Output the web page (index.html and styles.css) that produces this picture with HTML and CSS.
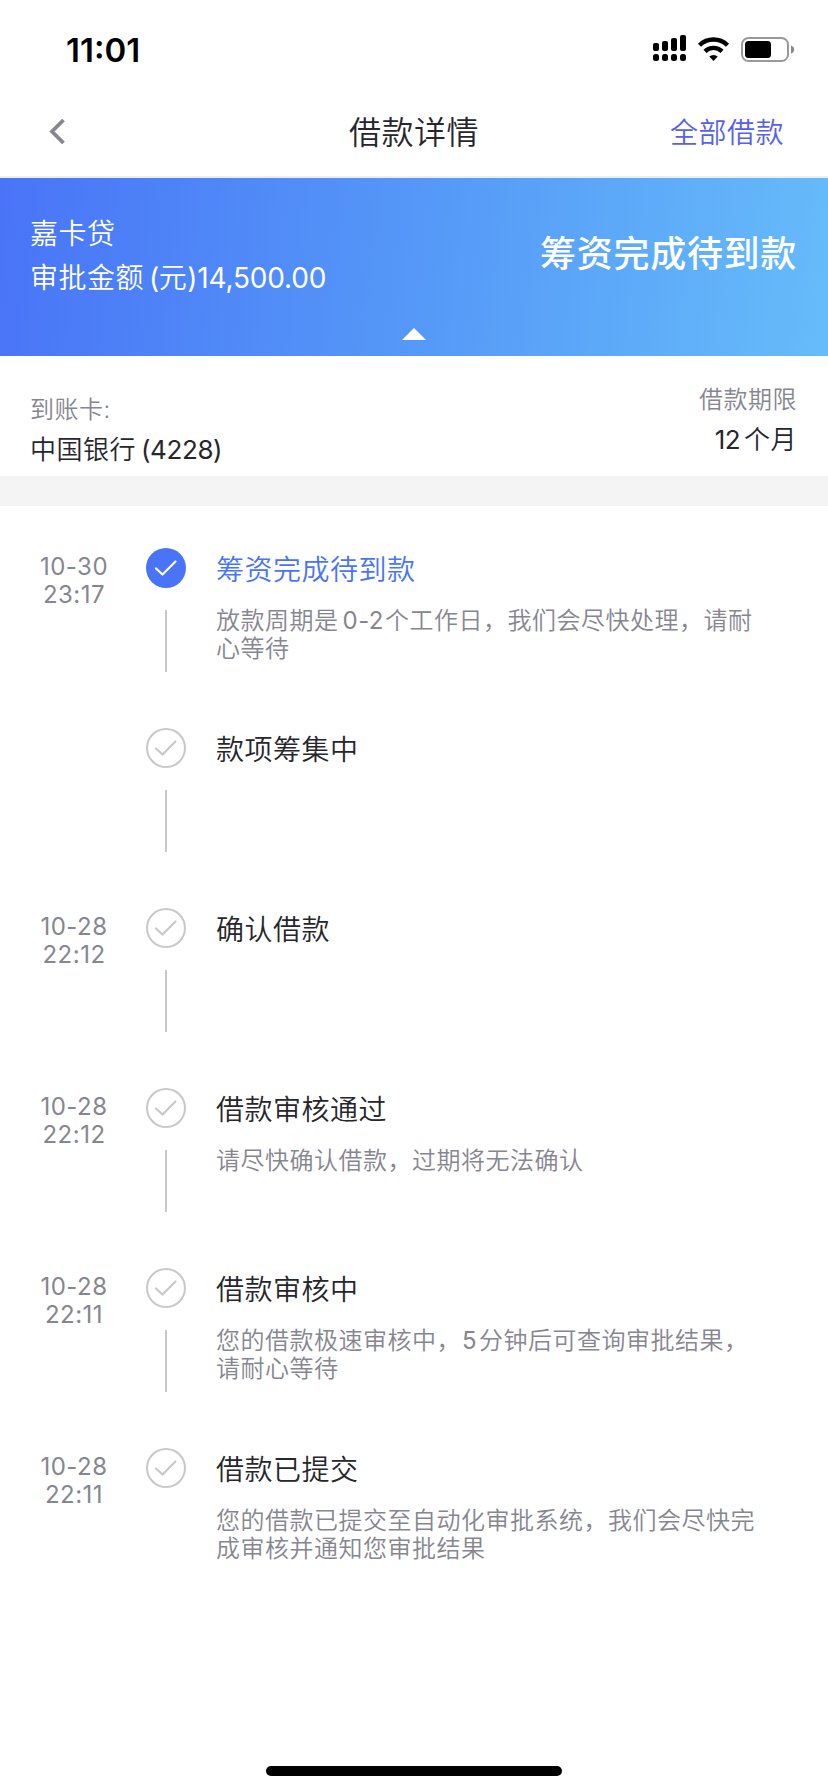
FILE: index.html
```html
<!DOCTYPE html>
<html lang="zh-CN">
<head>
    <meta charset="UTF-8">
    <title>借款详情</title>
    <link rel="stylesheet" href="styles.css">
</head>
<body>
<svg width="0" height="0" class="defs">
    <symbol id="check" viewBox="0 0 40 40">
        <path d="M10 20.500l6.500 6 13-13" fill="none" stroke="currentColor" stroke-width="2.200" stroke-linecap="round" stroke-linejoin="round"/>
    </symbol>
</svg>

<div class="status-bar">
    <span class="clock">11:01</span>
    <svg class="status-icons" width="144" height="30" viewBox="0 0 144 30">
        <rect x="0" y="9" width="6" height="8" rx="2"/>
        <rect x="9" y="7" width="6" height="10" rx="2"/>
        <rect x="18" y="4" width="6" height="13" rx="2"/>
        <rect x="27" y="1" width="6" height="16" rx="2"/>
        <rect x="0" y="20" width="6" height="7" rx="2.5"/>
        <rect x="9" y="20" width="6" height="7" rx="2.5"/>
        <rect x="18" y="20" width="6" height="7" rx="2.5"/>
        <rect x="27" y="20" width="6" height="7" rx="2.5"/>
        <g fill="none" stroke="#000" stroke-width="4.4">
            <path d="M46.5 11.2a20 20 0 0 1 28 0"/>
            <path d="M52 17.3a12.3 12.3 0 0 1 17 0"/>
        </g>
        <path d="M60.5 27l-4.2-4.4a6 6 0 0 1 8.4 0z"/>
        <rect x="89" y="4" width="46" height="23" rx="6.5" fill="none" stroke="#999" stroke-width="2"/>
        <rect x="92" y="7" width="26" height="17" rx="3.5"/>
        <path d="M138 11.500q3.200 1 3.200 4t-3.200 4z" fill="#888"/>
    </svg>
</div>

<div class="nav">
    <svg class="back" width="20" height="28" viewBox="0 0 20 28">
        <path d="M15.500 3L4 14.500 15.500 26" fill="none" stroke="#86868f" stroke-width="3.800"/>
    </svg>
    <h1>借款详情</h1>
    <a class="all">全部借款</a>
</div>

<div class="banner">
    <div class="product">
        <div>嘉卡贷</div>
        <div>审批金额<span class="latin">(</span>元<span class="amount">)14,500.00</span></div>
    </div>
    <div class="state">筹资完成待到款</div>
    <i class="arrow"></i>
</div>

<div class="info">
    <div class="card">
        <div class="label">到账卡:</div>
        <div class="value">中国银行<span class="latin">(4228)</span></div>
    </div>
    <div class="term">
        <div class="label">借款期限</div>
        <div class="value"><span class="months">12</span>个月</div>
    </div>
</div>

<div class="steps">
    <div class="step active">
        <div class="time">10-30<br>23:17</div>
        <div class="mark"><svg class="dot"><use href="#check"/></svg><i class="line"></i></div>
        <div class="content">
            <h2>筹资完成待到款</h2>
            <p>放款周期是<span class="num">0-2</span>个工作日，我们会尽快处理，请耐<br>心等待</p>
        </div>
    </div>
    <div class="step">
        <div class="time"></div>
        <div class="mark"><svg class="dot"><use href="#check"/></svg><i class="line"></i></div>
        <div class="content">
            <h2>款项筹集中</h2>
        </div>
    </div>
    <div class="step">
        <div class="time">10-28<br>22:12</div>
        <div class="mark"><svg class="dot"><use href="#check"/></svg><i class="line"></i></div>
        <div class="content">
            <h2>确认借款</h2>
        </div>
    </div>
    <div class="step">
        <div class="time">10-28<br>22:12</div>
        <div class="mark"><svg class="dot"><use href="#check"/></svg><i class="line"></i></div>
        <div class="content">
            <h2>借款审核通过</h2>
            <p>请尽快确认借款，过期将无法确认</p>
        </div>
    </div>
    <div class="step">
        <div class="time">10-28<br>22:11</div>
        <div class="mark"><svg class="dot"><use href="#check"/></svg><i class="line"></i></div>
        <div class="content">
            <h2>借款审核中</h2>
            <p>您的借款极速审核中，<span class="five">5</span>分钟后可查询审批结果，<br>请耐心等待</p>
        </div>
    </div>
    <div class="step">
        <div class="time">10-28<br>22:11</div>
        <div class="mark"><svg class="dot"><use href="#check"/></svg></div>
        <div class="content">
            <h2>借款已提交</h2>
            <p>您的借款已提交至自动化审批系统，我们会尽快完<br>成审核并通知您审批结果</p>
        </div>
    </div>
</div>

<div class="home-bar"></div>
</body>
</html>
```
FILE: styles.css
```css
* {
    box-sizing: border-box;
    margin: 0;
    padding: 0;
}

body {
    display: flex;
    flex-direction: column;
    height: 1792px;
    background: #fff;
    color: #26262b;
    font-family: Inter, "Noto Sans CJK SC", sans-serif;
    font-weight: 350;
    letter-spacing: 0.5px;
    white-space: nowrap;
}

.defs {
    position: absolute;
}

.status-bar {
    display: flex;
    justify-content: space-between;
    height: 88px;
    padding: 34px 31px 0 66px;
    color: #000;
}

.clock {
    font-size: 33px;
    line-height: 32px;
    font-weight: 600;
    letter-spacing: 0;
}

.nav {
    display: grid;
    grid-template-columns: 1fr auto 1fr;
    align-items: center;
    height: 90px;
    padding: 0 44px 2px 48px;
    border-bottom: 2px solid #eee;
}

.nav h1 {
    padding-top: 4px;
    margin-left: -4px;
    font-size: 32px;
    font-weight: 350;
    line-height: 40px;
}

.nav .all {
    justify-self: end;
    font-size: 28px;
    color: #5661e8;
}

.banner {
    position: relative;
    display: flex;
    justify-content: space-between;
    height: 178px;
    padding: 34px 31px 0 30px;
    background: linear-gradient(97deg, #4974f7, #5598f8 50%, #66bcfa);
    color: #fff;
}

.product {
    font-size: 28px;
    line-height: 44px;
}

.latin,
.amount,
.months,
.num,
.five,
.time {
    font-weight: 400;
}

.latin {
    margin-left: 5px;
    letter-spacing: -0.4px;
}

.amount {
    letter-spacing: -0.2px;
}

.state {
    font-size: 36px;
    line-height: 84px;
    font-weight: 500;
    letter-spacing: 0.7px;
}

.arrow {
    position: absolute;
    left: 402px;
    bottom: 16px;
    border: 12px solid transparent;
    border-top: 0;
    border-bottom-color: #fff;
}

.info {
    display: flex;
    justify-content: space-between;
    height: 150px;
    padding: 24px 31px 0 30px;
    border-bottom: 30px solid #f4f4f4;
    line-height: 40px;
}

.card {
    padding-top: 10px;
}

.term {
    text-align: right;
}

.label {
    font-size: 24px;
    color: #86868f;
}

.value {
    font-size: 26px;
}

.months {
    margin-right: 4px;
    letter-spacing: -0.6px;
}

.steps {
    flex: 1;
    padding: 42px 30px 0;
}

.step {
    display: flex;
    height: 180px;
}

.time {
    width: 88px;
    padding-top: 5px;
    font-size: 24px;
    line-height: 28px;
    text-align: center;
    color: #86868f;
}

.mark {
    display: flex;
    flex-direction: column;
    align-items: center;
    width: 40px;
    margin: 0 30px 0 28px;
}

.dot {
    width: 40px;
    height: 40px;
    border-radius: 50%;
    color: #c8c8ca;
    box-shadow: inset 0 0 0 2px #c8c8ca;
}

.active .dot {
    background: #4974f8;
    box-shadow: none;
    color: #fff;
}

.line {
    width: 2px;
    height: 62px;
    margin-top: 22px;
    background: #c8c8ca;
}

h2 {
    padding-top: 2px;
    font-size: 28px;
    font-weight: 350;
    line-height: 40px;
}

.active h2 {
    color: #4974f8;
}

p {
    margin-top: 17px;
    font-size: 24px;
    line-height: 28px;
    color: #86868f;
}

.num {
    margin: 0 1px 0 4px;
}

.five {
    margin: 0 2px 0 1px;
}

.home-bar {
    width: 296px;
    height: 10px;
    margin: 0 auto 16px;
    border-radius: 5px;
    background: #000;
}
```
